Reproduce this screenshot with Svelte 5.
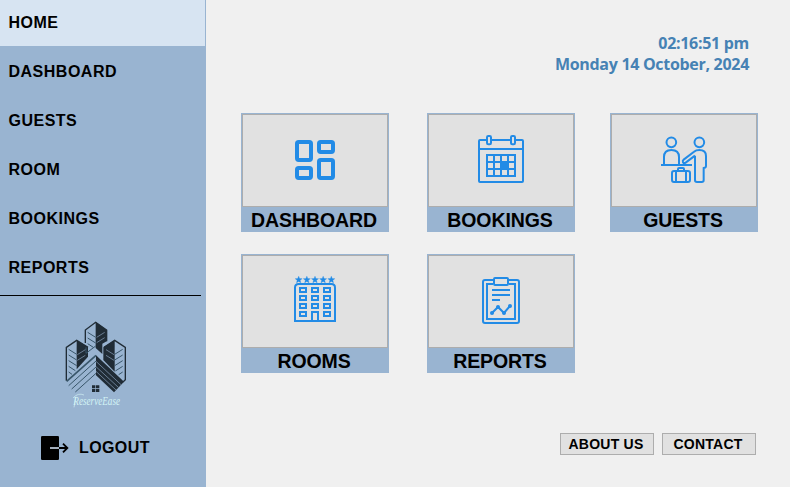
<script>
  const menu = ['HOME', 'DASHBOARD', 'GUESTS', 'ROOM', 'BOOKINGS', 'REPORTS'];
  let active = $state('HOME');
  const cards = [
    { id: 'dashboard', label: 'DASHBOARD', box: '24 30 432 273' },
    { id: 'bookings', label: 'BOOKINGS', box: '27 30 432 273' },
    { id: 'guests', label: 'GUESTS', box: '21 30 432 273' },
    { id: 'rooms', label: 'ROOMS', box: '24 24 432 273' },
    { id: 'reports', label: 'REPORTS', box: '27 24 432 273' }
  ];
  const stars = [191, 215.5, 240, 264.5, 289];
  const floors = [126, 150, 174, 198];
</script>

<div class="app">
  <aside>
    <nav>
      {#each menu as item}
        <button class="item" class:active={active === item} onclick={() => (active = item)}>{item}</button>
      {/each}
    </nav>
    <svg class="logo" viewBox="0 0 270 315" fill="none">
      <g fill="#202c36">
        <path d="M137 36L170 60V94L157 101V132L137 114Z" />
        <path d="M80 91L114 111V140L80 178Z" />
        <path d="M194 91V185L160 150V112Z" />
        <path d="M138 136L222 215L192 247L138 196Z" />
      </g>
      <g stroke="#202c36" stroke-width="4">
        <path d="M106 99V60L137 37L170 60V94" />
        <path d="M49 212V112L80 91L114 112" />
        <path d="M162 112L194 91L226 112V209L219 216" />
      </g>
      <g stroke="#38566a" stroke-width="3">
        <path d="M113 67L137 82M113 84L137 99M113 101L130 112M108 112V130L137 108" />
        <path d="M56 118L80 133M56 135L80 150M56 152L80 167M56 169L76 182M56 186L66 193" />
        <path d="M218 118L194 133M218 135L194 150M218 152L194 167M218 169L196 183M218 186L206 194" />
        <path d="M50 214L138 136" stroke-width="5" />
        <path d="M56 227L138 153M65 237L138 171M76 246L138 190" />
      </g>
      <g stroke="#9ab3d1" stroke-width="1.8">
        <path d="M140 82L164 67M140 98L164 83M82 134L106 119M82 151L106 136M192 134L168 119M192 151L168 136" />
        <path d="M138 154L213 224M138 170L205 232M138 184L198 240" />
      </g>
      <path d="M126 226h10v9h-10zM138 226h10v9h-10zM126 237h10v9h-10zM138 237h10v9h-10z" fill="#202c36" />
      <text x="70" y="284" textLength="140" lengthAdjust="spacingAndGlyphs" class="brand">ReserveEase</text>
      <path d="M78 260L72 292M69 264Q84 247 102 255" stroke="#d3f3f5" stroke-width="2" />
    </svg>
    <button class="logout">
      <svg viewBox="0 0 84 72" width="28" height="24">
        <path d="M4 0H50Q54 0 54 4V68Q54 72 50 72H4Q0 72 0 68V4Q0 0 4 0Z" fill="#000" />
        <path d="M27 36H55" stroke="#c4d2e3" stroke-width="5" />
        <path d="M54 36H79M66 23L79 36L66 49" fill="none" stroke="#000" stroke-width="5.5" />
      </svg>
      <span>LOGOUT</span>
    </button>
  </aside>

  <main>
    <header>
      <div class="time">02:16:51 pm</div>
      <div class="date">Monday 14 October, 2024</div>
    </header>

    <section class="cards">
      {#each cards as card}
        <div class="card">
          <button class="tile" aria-label={card.label}>
            <svg viewBox={card.box} fill="none" stroke="#228be6" stroke-width="6">
              {#if card.id === 'dashboard'}
                <g stroke-width="12">
                  <rect x="186" y="111" width="42" height="54" rx="5" />
                  <rect x="252" y="111" width="42" height="30" rx="5" />
                  <rect x="186" y="189" width="42" height="30" rx="5" />
                  <rect x="252" y="165" width="42" height="54" rx="5" />
                </g>
              {:else if card.id === 'bookings'}
                <path d="M198 105H180Q177 105 177 108V228Q177 231 180 231H306Q309 231 309 228V108Q309 105 306 105H288M216 105H270M177 132H309" />
                <rect x="201" y="93" width="12" height="25" rx="4" />
                <rect x="273" y="93" width="12" height="25" rx="4" />
                <path d="M201 150H285V213H201ZM222 150V213M243 150V213M264 150V213M201 171H285M201 192H285" />
                <path d="M243 171H264V192H243Z" fill="#228be6" />
              {:else if card.id === 'guests'}
                <circle cx="199" cy="112" r="14.500" />
                <circle cx="283" cy="112" r="14.500" />
                <path d="M177 178V156Q177 135 199 135Q222 135 222 156V178M168 180H261" />
                <path d="M270 152L242 173Q237 176 234 172Q232 167 236 164L267 140Q273 135 283 135Q303 135 303 153V183Q303 188 296 189V226Q296 231 290 231H276Q270 231 270 226V152" />
                <rect x="201" y="198" width="54" height="33" rx="6" />
                <path d="M213 198V231M243 198V231M219 197V192Q219 189 222 189H234Q237 189 237 192V197" />
              {:else if card.id === 'rooms'}
                {#each stars as x}
                  <path transform="translate({x} 95)" d="M0-10.5L2.8-3.5L10.5-3L4.5 2L6.5 9.5L0 5.3L-6.5 9.5L-4.5 2L-10.5-3L-2.8-3.5Z" fill="#228be6" stroke="#228be6" stroke-width="1" />
                {/each}
                <path d="M180 219V119Q180 108 191 108H289Q300 108 300 119V219Z" />
                {#each floors as y, i}
                  <rect x="195" y={y - 6} width="18" height="12" />
                  {#if i < 3}<rect x="231" y={y - 6} width="18" height="12" />{/if}
                  <rect x="267" y={y - 6} width="18" height="12" />
                {/each}
                <path d="M231 219V192H249V219" />
              {:else}
                <path d="M219 96H195Q189 96 189 102V219Q189 225 195 225H291Q297 225 297 219V102Q297 96 291 96H267" />
                <path d="M219 108H201V213H285V108H267" />
                <rect x="222" y="90" width="42" height="21" rx="3" />
                <path d="M216 126H270M216 141H270M216 156H240M216 195L234 177L252 195L270 174" />
                <g fill="#228be6" stroke="none">
                  <circle cx="216" cy="195" r="6" /><circle cx="234" cy="177" r="6" />
                  <circle cx="252" cy="195" r="6" /><circle cx="270" cy="174" r="6" />
                </g>
              {/if}
            </svg>
          </button>
          <div class="label"><span>{card.label}</span></div>
        </div>
      {/each}
    </section>

    <footer>
      <button class="small">ABOUT US</button>
      <button class="small">CONTACT</button>
    </footer>
  </main>
</div>

<style>
  :global(body) { margin: 0; }
  .app {
    display: flex;
    width: 790px;
    height: 487px;
    overflow: hidden;
    background: #f0f0f0;
    color: #000;
    font-family: "Liberation Sans", Arial, sans-serif;
    font-weight: 700;
  }
  button {
    box-sizing: border-box;
    margin: 0;
    padding: 0;
    border: 0;
    border-radius: 0;
    background: none;
    color: inherit;
    font: inherit;
  }
  aside {
    display: flex;
    flex-direction: column;
    align-items: flex-start;
    width: 206px;
    flex: none;
    background: #99b4d1;
  }
  nav {
    display: flex;
    flex-direction: column;
    gap: 3px;
    width: 201px;
    height: 295px;
    border-bottom: 1px solid #000;
  }
  .item {
    width: 205px;
    height: 46px;
    flex: none;
    padding: 0 0 1px 8.5px;
    text-align: left;
    font-size: 16px;
    letter-spacing: 0.5px;
  }
  .item.active { background: #d7e4f2; }
  .logo {
    width: 90px;
    height: 105px;
    margin: 14px 0 0 50px;
  }
  .brand {
    fill: #d3f3f5;
    font: italic 400 40px "Liberation Serif", cursive;
  }
  .logout {
    display: flex;
    align-items: center;
    gap: 10px;
    height: 24px;
    margin: 21px 0 0 41px;
    font-size: 16px;
    letter-spacing: 0.4px;
  }
  .logout span { padding-bottom: 1px; }
  main {
    display: flex;
    flex-direction: column;
    flex: 1;
  }
  header {
    height: 80px;
    padding: 33px 41px 0 0;
    text-align: right;
    color: #4682b4;
    font: 700 16px/21px "Open Sans", "Noto Sans", sans-serif;
    letter-spacing: -0.3px;
  }
  .cards {
    display: grid;
    grid-template-columns: 148px 148px 148px;
    column-gap: 38px;
    row-gap: 22px;
    padding-left: 35px;
  }
  .card {
    box-sizing: border-box;
    height: 119px;
    padding: 1px;
    background: #99b4d1;
  }
  .card:nth-child(3) { margin: 0 3px 0 -3px; }
  .tile {
    display: block;
    width: 146px;
    height: 93px;
    border: 1px solid #adadad;
    background: #e1e1e1;
  }
  .tile svg {
    display: block;
    width: 144px;
    height: 91px;
  }
  .label {
    height: 24px;
    padding-right: 2px;
    line-height: 26px;
    text-align: center;
    font-size: 19.5px;
    letter-spacing: -0.1px;
  }
  footer {
    display: flex;
    gap: 8px;
    padding: 60px 0 0 354px;
  }
  .small {
    width: 94px;
    height: 22px;
    border: 1px solid #adadad;
    background: #e1e1e1;
    font-size: 14px;
    letter-spacing: 0.25px;
    padding-right: 2px;
  }
</style>
